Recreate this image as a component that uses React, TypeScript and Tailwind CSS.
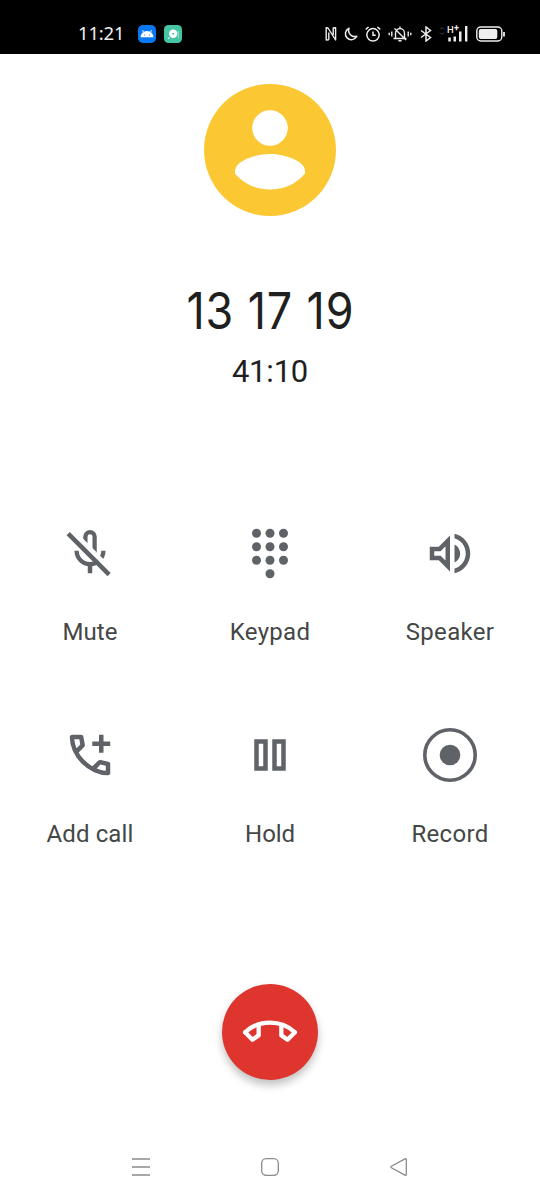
import React from 'react';

interface IconProps { children: React.ReactNode; }

// 24-unit grid drawn at 54px
const Icon: React.FC<IconProps> = ({ children }) => (
  <svg viewBox="0 0 24 24" className="w-[54px] h-[54px] overflow-visible" fill="currentColor">{children}</svg>
);

const PHONE = "M19.95 21q-3.125 0-6.175-1.363t-5.55-3.862Q5.725 13.275 4.363 10.225T3 4.05q0-.45.3-.75T4.05 3H8.1q.35 0 .625.238t.325.562l.65 3.5q.05.4-.025.675T9.4 8.45L6.975 10.9q.5.925 1.187 1.787t1.513 1.663q.775.775 1.625 1.438T13.1 17l2.35-2.35q.225-.225.588-.337t.712-.063l3.45.7q.35.1.575.362T21 15.9v4.05q0 .45-.3.75t-.75.3M6.025 9l1.65-1.65L7.25 5H5.025q.125 1.025.35 2.025T6.025 9m8.95 8.95q.975.425 1.988.675T19 18.95v-2.2l-2.35-.475z";

const actions = [
  {
    label: 'Mute',
    tracking: 'tracking-[0px]',
    icon: (
      <Icon>
        <g fill="none" stroke="currentColor" strokeWidth="1.9">
          <path d="M9.95 11V4.8a2.05 2.05 0 0 1 4.1 0V12" />
          <path d="M6.05 11a5.95 5.95 0 0 0 11.9 0" />
          <path d="M12 16.5v4.5" strokeWidth="2" />
          <path d="M3.6 1.9l19 19" stroke="#fff" strokeWidth="2.2" />
          <path d="M2.3 3.4l18.2 18.2" strokeWidth="2" />
        </g>
      </Icon>
    ),
  },
  {
    label: 'Keypad',
    tracking: 'tracking-[0.3px]',
    icon: (
      <Icon>
        {[3.2, 9.2, 15.2].map((y) => [6, 12, 18].map((x) => <circle key={`${x}-${y}`} cx={x} cy={y} r="2" />))}
        <circle cx="12" cy="21.2" r="2" />
      </Icon>
    ),
  },
  {
    label: 'Speaker',
    tracking: 'tracking-[0.3px]',
    icon: (
      <Icon>
        <path transform="translate(0 .2)" d="M3 9v6h4l5 5V4L7 9H3zm7-.17v6.34L7.83 13H5v-2h2.83L10 8.83zM16.5 12c0-1.77-1.02-3.29-2.5-4.03v8.05c1.48-.73 2.5-2.25 2.5-4.02zM14 3.23v2.06c2.89.86 5 3.54 5 6.71s-2.11 5.85-5 6.71v2.06c4.01-.91 7-4.49 7-8.77s-2.99-7.86-7-8.77z" />
      </Icon>
    ),
  },
  {
    label: 'Add call',
    tracking: 'tracking-[0.1px]',
    icon: <Icon><path d={PHONE} /><path d="M16 3h2v3h3v2h-3v3h-2V8h-3V6h3z" /></Icon>,
  },
  {
    label: 'Hold',
    tracking: 'tracking-[-0.1px]',
    icon: <Icon><path fillRule="evenodd" d="M5 5h6v14H5zM7 7v10h2V7zM13 5h6v14h-6zM15 7v10h2V7z" /></Icon>,
  },
  {
    label: 'Record',
    tracking: 'tracking-[0.3px]',
    icon: (
      <Icon>
        <circle cx="12" cy="12" r="11.2" fill="none" stroke="currentColor" strokeWidth="1.6" />
        <circle cx="12" cy="12" r="4.6" />
      </Icon>
    ),
  },
];

const StatusBar = () => (
  <header className="h-[54px] bg-black flex items-center justify-between pl-[78px] pr-[34px] pt-[14px] pb-[1px] text-[#eee]">
    <div className="flex items-center">
      <span className="w-[60px] text-[18.5px] leading-none tracking-[-0.2px] font-['Noto_Sans',sans-serif]">11:21</span>
      <svg viewBox="0 0 18 18" className="w-[18px] h-[18px]">
        <rect width="18" height="18" rx="5" fill="#0a78f5" />
        <path d="M2.6 12.3a6.4 6.3 0 0 1 12.8 0z" fill="#fff" />
        <path d="M5.8 7.5L4.5 5.2M12.2 7.5l1.3-2.3" stroke="#fff" strokeWidth="1" />
        <circle cx="6.6" cy="10" r=".6" fill="#0a78f5" />
        <circle cx="11.4" cy="10" r=".6" fill="#0a78f5" />
      </svg>
      <svg viewBox="0 0 18 18" className="w-[18px] h-[18px] ml-[8px]">
        <rect width="18" height="18" rx="4.5" fill="#45c5a4" />
        <circle cx="9.2" cy="8.8" r="4.2" fill="#fff" />
        <path d="M4 13.5l1.5-.8" stroke="#fff" strokeWidth="1.2" />
        <path d="M14.5 6v7" stroke="#8fdcc8" strokeWidth="1" />
        <circle cx="9.2" cy="8.8" r="1" fill="#45c5a4" />
      </svg>
    </div>
    <div className="flex items-center">
      <svg viewBox="0 0 12 16" className="w-3 h-4" fill="none" stroke="currentColor" strokeWidth="1.4" strokeLinejoin="round">
        <path d="M3.8 13.8L1.2 14V1.8L3 2l7.6 12V1.8L8.2 2v7M3.8 13.8V6.5" />
      </svg>
      <svg viewBox="0 0 14 14" className="w-[14px] h-[14px] ml-[7px]" fill="none" stroke="currentColor" strokeWidth="1.5" strokeLinejoin="round">
        <path d="M5 1.2A6 6 0 1 0 12.8 9.3 6.3 6.3 0 0 1 5 1.2z" />
      </svg>
      <svg viewBox="0 0 16 16" className="w-4 h-4 ml-[7px]" fill="none" stroke="currentColor" strokeWidth="1.5">
        <circle cx="8" cy="8.8" r="6.2" />
        <path d="M8 5.5v3.7h2.8M.8 3.4L3.6 1M15.2 3.4L12.4 1" />
      </svg>
      <svg viewBox="0 0 24 16" className="w-6 h-4 ml-[7px] mr-[1px]" fill="none" stroke="currentColor" strokeWidth="1.4">
        <path d="M5.5 12.5h13M7.5 12.2V7.2a4.5 4.7 0 0 1 9 0v5M12 .5v2M10.4 14.8h3.2M6.5 2.5L18 14" />
        <path d="M1.2 6.8v2.4M3.8 5.5v5M20.2 5.5v5M22.8 6.8v2.4" />
      </svg>
      <svg viewBox="0 0 12 16" className="w-3 h-4 ml-[7px]" fill="none" stroke="currentColor" strokeWidth="1.5">
        <path d="M1 4.5l9.5 7L6 15V1l4.5 3.5L1 11.5" />
      </svg>
      <svg viewBox="0 0 6 10" className="w-[6px] h-[10px] ml-[7px] mb-[6px]" fill="none" stroke="#4a4a4a">
        <path d="M1 3.5l2-2 2 2M1 6.5l2 2 2-2" />
      </svg>
      <div className="relative ml-[3px] w-5 h-4">
        <span className="absolute -left-[1px] -top-[1px] text-[9.5px] leading-none font-medium font-['Roboto',sans-serif]">H</span>
        <span className="absolute left-[6px] -top-[2px] text-[9px] leading-none font-bold font-['Roboto',sans-serif]">+</span>
        <svg viewBox="0 0 20 16" className="w-5 h-4" fill="currentColor">
          <path d="M.3 11.5h2.5v4H.3zM5.5 10.5H8v5H5.5zM11 5.5h2.5v10H11zM17 0h2.4v15.5H17z" />
        </svg>
      </div>
      <svg viewBox="0 0 30 16" className="w-[30px] h-4 ml-[8px]" fill="none" stroke="currentColor" strokeWidth="1.4">
        <rect x=".8" y="1" width="25" height="14" rx="4" />
        <rect x="2.8" y="3" width="18.5" height="10" rx="2" fill="currentColor" stroke="none" />
        <path d="M28 6v4.5" strokeWidth="1.8" />
      </svg>
    </div>
  </header>
);

const NavBar = () => (
  <nav className="h-[18px] flex justify-between pl-[131px] pr-[131px] mt-[78px] text-[#8a8a8a]">
    <svg viewBox="0 0 20 18" className="w-5 h-[18px]" stroke="currentColor" strokeWidth="1.4"><path d="M1 1h18M1 9h18M1 17h18" /></svg>
    <svg viewBox="0 0 18 18" className="w-[18px] h-[18px]" fill="none" stroke="currentColor" strokeWidth="1.3"><rect x=".7" y=".7" width="16.6" height="16.6" rx="4.5" /></svg>
    <svg viewBox="0 0 20 18" className="w-5 h-[18px]" fill="none" stroke="currentColor" strokeWidth="1.3" strokeLinejoin="round">
      <path d="M2.4 8.2L16 .9q1.3-.5 1.3.7v14.8q0 1.2-1.3.7L2.4 9.8q-1.2-.8 0-1.6z" />
    </svg>
  </nav>
);

const App: React.FC = () => {
  return (
    <div className="w-[540px] h-[1200px] bg-white overflow-hidden font-['Roboto',sans-serif]">
      <StatusBar />
      <section className="flex flex-col items-center pt-[30px]">
        <svg viewBox="0 0 132 132" className="w-[132px] h-[132px]">
          <circle cx="66" cy="66" r="66" fill="#fbc834" />
          <circle cx="66" cy="44" r="17.8" fill="#fff" />
          <path d="M31 87C31 77 51 70 66 70s35 7 35 17v2.5C92 100 80 105.500 66 105.500S40 100 31 89.500z" fill="#fff" />
        </svg>
        <h1 className="mt-[64px] h-[62px] text-[51px] leading-[61px] text-[#1f1f1f] font-['Inter',sans-serif] tracking-[1px] scale-x-[0.88] whitespace-nowrap">13 17 19</h1>
        <p className="mt-[12px] h-9 text-[31px] leading-9 text-[#1f1f1f] tracking-[-0.2px]">41:10</p>
      </section>

      <section className="grid grid-cols-3 mt-[136px]">
        {actions.map((a) => (
          <button key={a.label} className="h-[202px] flex flex-col items-center text-[#5f6368]">
            {a.icon}
            <span className={`mt-[36px] text-[24px] leading-8 text-[#444746] ${a.tracking}`}>{a.label}</span>
          </button>
        ))}
      </section>

      <div className="flex justify-center mt-[54px]">
        <button aria-label="End call" className="w-24 h-24 rounded-full bg-[#de352e] text-white flex items-center justify-center shadow-[0_5px_9px_rgba(0,0,0,0.25)]">
          <Icon>
            <g fill="none" stroke="currentColor" strokeWidth="1.9" strokeLinejoin="round" strokeLinecap="round">
              <path d="M.95 12.1C4 9.2 7.8 7.8 12 7.8s8 1.4 11.05 4.3" />
              <path d="M.95 12.1L4.2 15.4l2.76-1.9V9.2" />
              <path d="M23.05 12.1l-3.25 3.3-2.76-1.9V9.2" />
            </g>
          </Icon>
        </button>
      </div>
      <NavBar />
    </div>
  );
};

export default App;
